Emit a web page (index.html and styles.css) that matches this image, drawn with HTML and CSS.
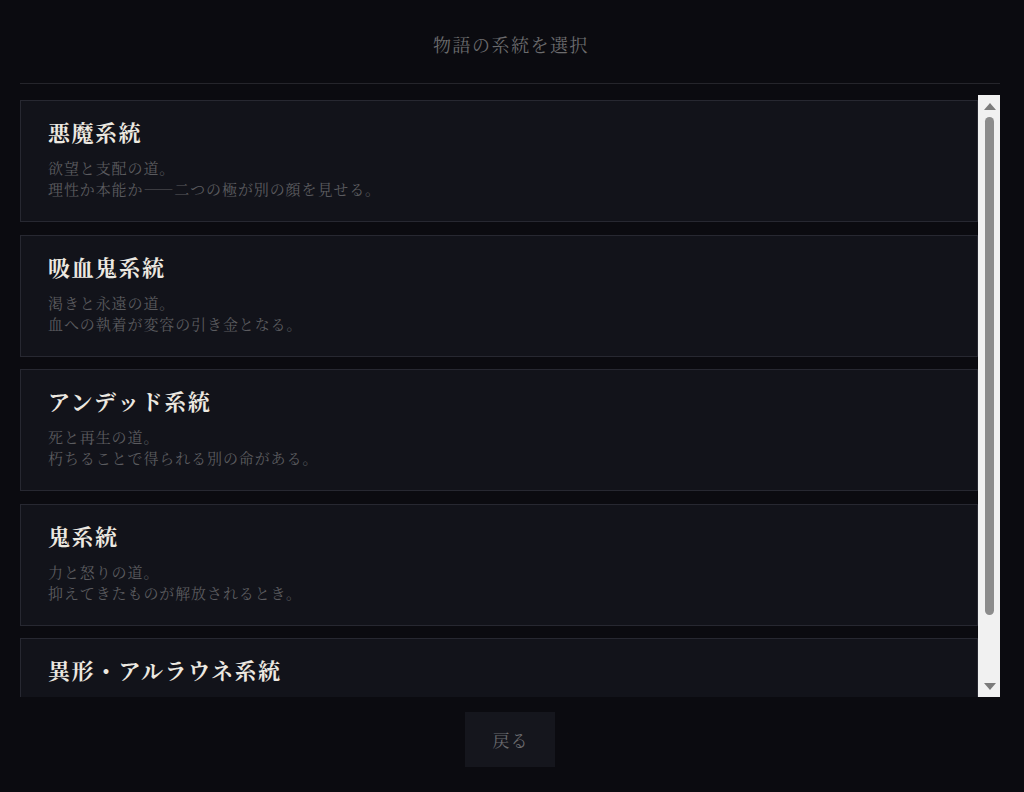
FILE: index.html
```html
<!DOCTYPE html>
<html lang="ja">
<head>
  <meta charset="UTF-8">
  <title>物語の系統を選択</title>
  <link rel="stylesheet" href="styles.css">
</head>
<body>
  <div class="screen">
    <h1 class="heading">物語の系統を選択</h1>
    <div class="list-frame">
      <div class="lineage-list">
        <div class="lineage">
          <h2>悪魔系統</h2>
          <p>欲望と支配の道。<br>理性か本能か——二つの極が別の顔を見せる。</p>
        </div>
        <div class="lineage">
          <h2>吸血鬼系統</h2>
          <p>渇きと永遠の道。<br>血への執着が変容の引き金となる。</p>
        </div>
        <div class="lineage">
          <h2>アンデッド系統</h2>
          <p>死と再生の道。<br>朽ちることで得られる別の命がある。</p>
        </div>
        <div class="lineage">
          <h2>鬼系統</h2>
          <p>力と怒りの道。<br>抑えてきたものが解放されるとき。</p>
        </div>
        <div class="lineage">
          <h2>異形・アルラウネ系統</h2>
          <p>根と花の道。<br>人ならざる姿に、もうひとつの生が宿る。</p>
        </div>
      </div>
      <!-- scrollbar drawn by hand: headless chrome hides the native one -->
      <div class="scrollbar">
        <div class="sb-btn up"><span class="arrow up"></span></div>
        <div class="sb-track"><div class="sb-thumb"></div></div>
        <div class="sb-btn down"><span class="arrow down"></span></div>
      </div>
    </div>
    <div class="actions">
      <button class="back">戻る</button>
    </div>
  </div>
</body>
</html>
```

FILE: styles.css
```css
html, body { margin: 0; height: 100%; }
body {
  background: #0b0b10;
  color: #ddd;
  font-family: "Noto Serif CJK JP", "Noto Sans CJK JP", serif;
}
.screen { padding: 0 24px 0 20px; }

.heading {
  margin: 0;
  padding: 31px 0 25px 2px;
  text-align: center;
  font-size: 18px;
  font-weight: normal;
  line-height: 27px;
  letter-spacing: 1.5px;
  color: #6c6c6e;
  border-bottom: 1px solid #25252b;
}

.list-frame {
  margin-top: 11px;
  height: 602px;
  display: flex;
}
.lineage-list {
  flex: 1;
  min-width: 0;
  padding-top: 5px;
  overflow: hidden;
  display: flex;
  flex-direction: column;
  gap: 12.5px;
}

.scrollbar {
  width: 22px;
  flex-shrink: 0;
  background: #f1f1f1;
  display: flex;
  flex-direction: column;
}
.sb-btn { height: 20px; display: flex; justify-content: center; padding-left: 1px; }
.sb-btn.up { align-items: flex-end; padding-bottom: 5px; height: 15px; }
.sb-btn.down { align-items: flex-start; padding-top: 6px; height: 14px; }
.sb-track { flex: 1; display: flex; justify-content: center; padding-top: 2px; padding-left: 1px; }
.sb-thumb { width: 9px; height: 498px; border-radius: 5px; background: #8c8c8c; }
.arrow { width: 0; height: 0; border-left: 6px solid transparent; border-right: 6px solid transparent; }
.arrow.up { border-bottom: 7px solid #7b7b7b; }
.arrow.down { border-top: 7px solid #7b7b7b; }

.lineage {
  flex-shrink: 0;
  background: #12131a;
  border: 1px solid #272831;
  padding: 16px 27px 22px;
}
.lineage h2 {
  margin: 0 0 10px;
  font-size: 22px;
  line-height: 30px;
  letter-spacing: 1.5px;
  color: #ece8e0;
  font-weight: bold;
}
.lineage p {
  margin: 0;
  font-size: 15px;
  line-height: 21px;
  letter-spacing: 0.9px;
  color: #5b5b5f;
}

.actions { display: flex; justify-content: center; padding-top: 15px; }
.back {
  width: 90px;
  height: 55px;
  padding: 0 0 0 1px;
  background: #15161d;
  color: #6a6a6e;
  border: none;
  font-family: inherit;
  font-size: 17px;
  letter-spacing: 1px;
  cursor: pointer;
}
```
